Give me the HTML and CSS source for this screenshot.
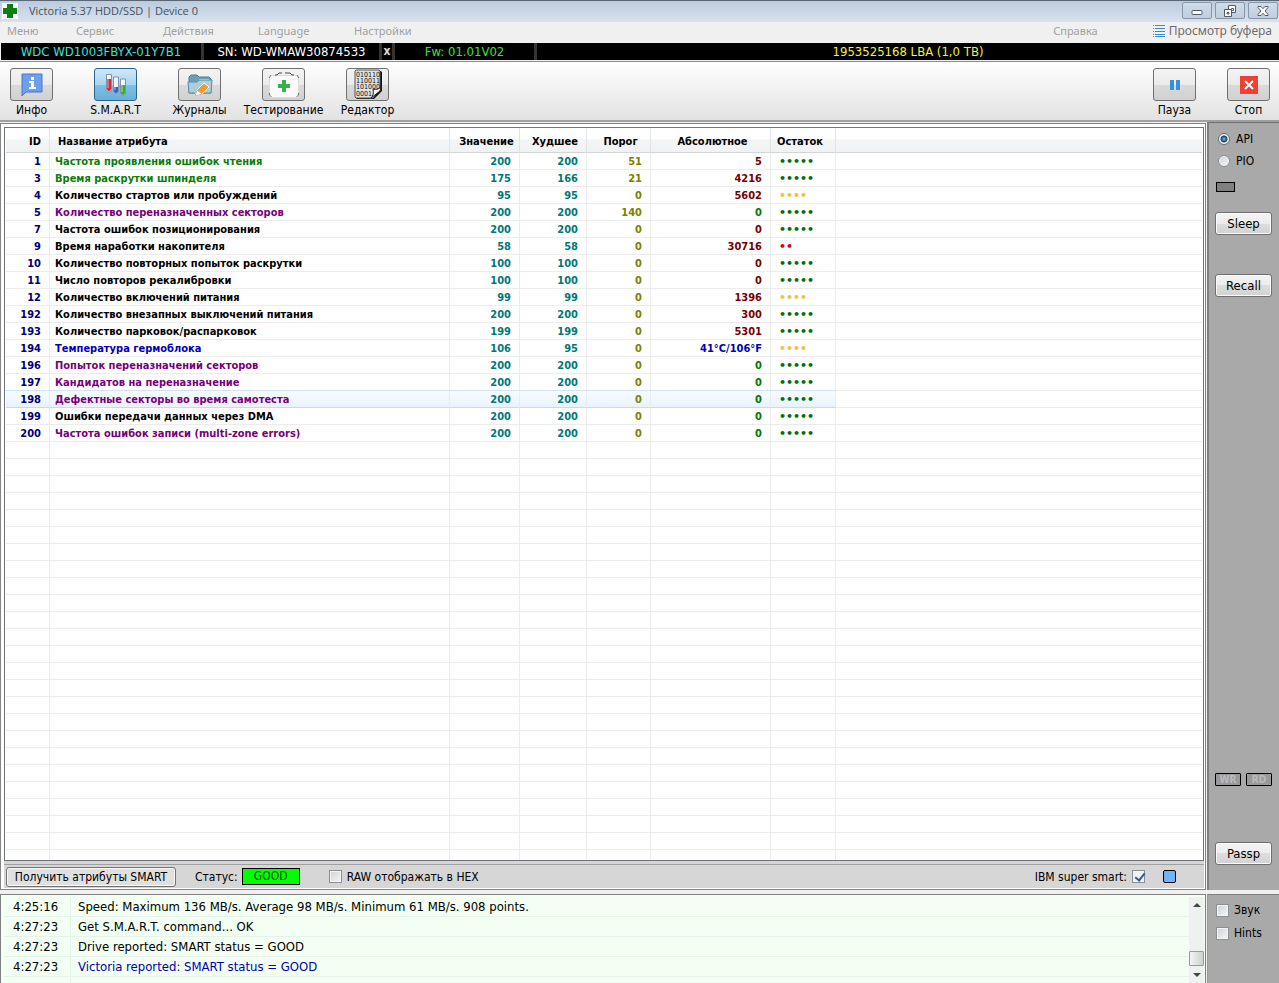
FILE: index.html
```html
<!DOCTYPE html>
<html lang="ru">
<head>
    <meta charset="UTF-8">
    <meta name="viewport" content="width=device-width, initial-scale=1.0">
    <title>Victoria 5.37 HDD/SSD | Device 0</title>
    <link rel="stylesheet" href="styles.css">
</head>
<body>

    <header class="titlebar">
        <svg class="logo" width="16" height="16" viewBox="0 0 16 16">
            <rect width="16" height="16" fill="#fff"/>
            <path d="M5 1h6v4h4v6h-4v4H5v-4H1V5h4z" fill="#0a8010"/>
        </svg>
        <span class="title">Victoria 5.37 HDD/SSD | Device 0</span>
        <div class="window-buttons">
            <button aria-label="Свернуть">
                <svg width="12" height="12" viewBox="0 0 12 12"><rect x="1" y="5.500" width="10" height="4" rx="1" fill="#fff" stroke="#4f5a68"/></svg>
            </button>
            <button aria-label="Восстановить">
                <svg width="12" height="12" viewBox="0 0 12 12" fill="#fff" stroke="#4f5a68"><path d="M4.500.5h7v7h-7z"/><path d="M7.500 3.500h2v2h-2z"/><path d="M.5 4.500h7v7h-7z"/><path d="M3 7.500h2v1.500H3z"/></svg>
            </button>
            <button aria-label="Закрыть">
                <svg width="12" height="12" viewBox="0 0 12 12"><path d="M1 1.500h3l2 2.200 2-2.200h3v1L8 6l3 3.500v1H8L6 8.300 4 10.500H1v-1L4 6 1 2.500z" fill="#fff" stroke="#4f5a68"/></svg>
            </button>
        </div>
    </header>

    <nav class="menu">
        <a href="#">Меню</a>
        <a href="#">Сервис</a>
        <a href="#">Действия</a>
        <a href="#">Language</a>
        <a href="#">Настройки</a>
        <a href="#" class="help">Справка</a>
        <a href="#" class="buffer">
            <svg width="12" height="12" viewBox="0 0 12 12" stroke="#2f8fd8"><path d="M0 .5h1M2 .5h10M0 3.500h1M2 3.500h10M0 6.500h1M2 6.500h10M0 9.500h1M2 9.500h10M0 11.500h1M2 11.500h10"/></svg>
            Просмотр буфера
        </a>
    </nav>

    <div class="device">
        <span class="model">WDC WD1003FBYX-01Y7B1</span>
        <span class="serial">SN: WD-WMAW30874533</span>
        <button class="close-device">x</button>
        <span class="firmware">Fw: 01.01V02</span>
        <span class="capacity">1953525168 LBA (1,0 TB)</span>
    </div>

    <div class="toolbar">
        <button class="tool">
            <span class="tool-icon">
                <svg width="22" height="24" viewBox="0 0 22 24">
                    <path d="M1 1h20v18H5l-4 4z" fill="#6d9fee" stroke="#4b79b8"/>
                    <path d="M10 4h3v3h-3zM8 8h5v6h2v2H8v-2h2v-4H8z" fill="#fff"/>
                </svg>
            </span>
            Инфо
        </button>
        <button class="tool">
            <span class="tool-icon active">
                <svg width="24" height="26" viewBox="0 0 24 26">
                    <g fill="#eef5fb" stroke="#7f92a6"><path d="M2.500 2.500v15a2.500 2.500 0 0 0 5 0v-15z"/><path d="M9.500 5v14a2.500 2.500 0 0 0 5 0V5z"/><path d="M16.500 7v14a2.500 2.500 0 0 0 5 0V7z"/></g>
                    <path d="M3 7h4v10a2 2 0 0 1-4 0z" fill="#d62b34"/>
                    <path d="M10 15h4v4a2 2 0 0 1-4 0z" fill="#2d62c6"/>
                    <path d="M17 13h4v8a2 2 0 0 1-4 0z" fill="#35ad3d"/>
                    <path d="M4 4v12M11 6v12M18 8v12" stroke="#fff" opacity=".6"/>
                </svg>
            </span>
            S.M.A.R.T
        </button>
        <button class="tool">
            <span class="tool-icon">
                <svg width="26" height="24" viewBox="0 0 26 24">
                    <path d="M2 20V4l2-2h6l2 2h10l2 2v14z" fill="#6b9fb5" stroke="#4d7f96"/>
                    <path d="M12 6h10v3H12z" fill="#e4f0f5"/>
                    <path d="M1 9h9l2-2h13l-1 13H2z" fill="#a9cfdd" stroke="#5c8ea2"/>
                    <path d="M8 23l2-6 7-7 5 4-7 7z" fill="#f39a2d" stroke="#fff"/>
                    <path d="M8 23l2-6 5 4z" fill="#fff" stroke="#bbb"/>
                </svg>
            </span>
            Журналы
        </button>
        <button class="tool">
            <span class="tool-icon">
                <svg width="32" height="28" viewBox="0 0 32 28">
                    <rect x="1.500" y="4.500" width="29" height="22" rx="2" fill="#fafafa" stroke="#dcdcdc"/>
                    <path d="M7 4h2l2-2h3M17 2h5l2 2h2" fill="none" stroke="#444"/>
                    <path d="M1 7l2-3M29 4l2 3M1.500 22v2l2 2M30.500 22v2l-2 2" fill="none" stroke="#777"/>
                    <path d="M14 9h4v4h4v4h-4v4h-4v-4h-4v-4h4z" fill="#35b34a"/>
                </svg>
            </span>
            Тестирование
        </button>
        <button class="tool">
            <span class="tool-icon">
                <svg width="30" height="31" viewBox="0 0 30 31">
                    <path d="M4 1h22l3 2v19l-8 8H4l-2-2V3z" fill="#111"/>
                    <path d="M3 1h23l1 1v18l-7 9H3l-1-1V2z" fill="#e2e2e2" stroke="#555"/>
                    <g class="bits"><text x="3" y="8">010110</text><text x="3" y="14">110011</text><text x="3" y="20">101000</text><text x="3" y="27">0001</text></g>
                    <path d="M18 29c2-2 3-5 2-9 3 1 6 0 8-2l-1 4z" fill="#f8f8f8" stroke="#222"/>
                </svg>
            </span>
            Редактор
        </button>
        <button class="tool pause">
            <span class="tool-icon">
                <svg width="12" height="12" viewBox="0 0 12 12"><path d="M1 1h4v10H1zM7 1h4v10H7z" fill="#2f93e0"/></svg>
            </span>
            Пауза
        </button>
        <button class="tool stop">
            <span class="tool-icon">
                <svg width="18" height="18" viewBox="0 0 18 18"><rect width="18" height="18" fill="#ea4335"/><path d="M5 5l8 8M13 5l-8 8" stroke="#fff" stroke-width="2"/></svg>
            </span>
            Стоп
        </button>
    </div>

    <main class="main">
        <section class="panel">
            <div class="table-box">
                <table class="smart">
                    <thead>
                        <tr>
                            <th class="id">ID</th>
                            <th class="name">Название атрибута</th>
                            <th class="value">Значение</th>
                            <th class="worst">Худшее</th>
                            <th class="limit">Порог</th>
                            <th class="raw">Абсолютное</th>
                            <th class="health">Остаток</th>
                            <th></th>
                        </tr>
                    </thead>
                    <tbody>
                        <tr class="green"><td>1</td><td>Частота проявления ошибок чтения</td><td>200</td><td>200</td><td>51</td><td>5</td><td>•••••</td><td></td></tr>
                        <tr class="green"><td>3</td><td>Время раскрутки шпинделя</td><td>175</td><td>166</td><td>21</td><td>4216</td><td>•••••</td><td></td></tr>
                        <tr><td>4</td><td>Количество стартов или пробуждений</td><td>95</td><td>95</td><td>0</td><td>5602</td><td class="warn">••••</td><td></td></tr>
                        <tr class="purple"><td>5</td><td>Количество переназначенных секторов</td><td>200</td><td>200</td><td>140</td><td>0</td><td>•••••</td><td></td></tr>
                        <tr><td>7</td><td>Частота ошибок позиционирования</td><td>200</td><td>200</td><td>0</td><td>0</td><td>•••••</td><td></td></tr>
                        <tr><td>9</td><td>Время наработки накопителя</td><td>58</td><td>58</td><td>0</td><td>30716</td><td class="bad">••</td><td></td></tr>
                        <tr><td>10</td><td>Количество повторных попыток раскрутки</td><td>100</td><td>100</td><td>0</td><td>0</td><td>•••••</td><td></td></tr>
                        <tr><td>11</td><td>Число повторов рекалибровки</td><td>100</td><td>100</td><td>0</td><td>0</td><td>•••••</td><td></td></tr>
                        <tr><td>12</td><td>Количество включений питания</td><td>99</td><td>99</td><td>0</td><td>1396</td><td class="warn">••••</td><td></td></tr>
                        <tr><td>192</td><td>Количество внезапных выключений питания</td><td>200</td><td>200</td><td>0</td><td>300</td><td>•••••</td><td></td></tr>
                        <tr><td>193</td><td>Количество парковок/распарковок</td><td>199</td><td>199</td><td>0</td><td>5301</td><td>•••••</td><td></td></tr>
                        <tr class="blue"><td>194</td><td>Температура гермоблока</td><td>106</td><td>95</td><td>0</td><td>41°C/106°F</td><td class="warn">••••</td><td></td></tr>
                        <tr class="purple"><td>196</td><td>Попыток переназначений секторов</td><td>200</td><td>200</td><td>0</td><td>0</td><td>•••••</td><td></td></tr>
                        <tr class="purple"><td>197</td><td>Кандидатов на переназначение</td><td>200</td><td>200</td><td>0</td><td>0</td><td>•••••</td><td></td></tr>
                        <tr class="purple selected"><td>198</td><td>Дефектные секторы во время самотеста</td><td>200</td><td>200</td><td>0</td><td>0</td><td>•••••</td><td></td></tr>
                        <tr><td>199</td><td>Ошибки передачи данных через DMA</td><td>200</td><td>200</td><td>0</td><td class="zero">0</td><td>•••••</td><td></td></tr>
                        <tr class="purple"><td>200</td><td>Частота ошибок записи (multi-zone errors)</td><td>200</td><td>200</td><td>0</td><td>0</td><td>•••••</td><td></td></tr>
                        <tr class="filler"><td></td><td></td><td></td><td></td><td></td><td></td><td></td><td></td></tr>
                    </tbody>
                </table>
            </div>
            <div class="status-row">
                <button class="btn get-smart">Получить атрибуты SMART</button>
                <span class="status-label">Статус:</span>
                <span class="status-value">GOOD</span>
                <label class="check raw-hex"><input type="checkbox">RAW отображать в HEX</label>
                <label class="check ibm" for="ibm">IBM super smart:<input type="checkbox" id="ibm" checked></label>
                <span class="blue-box"></span>
            </div>
        </section>

        <aside class="sidebar">
            <label class="check"><input type="radio" name="mode" checked>API</label>
            <label class="check"><input type="radio" name="mode">PIO</label>
            <span class="led"></span>
            <button class="btn side-btn sleep">Sleep</button>
            <button class="btn side-btn recall">Recall</button>
            <div class="indicators">
                <span>WR</span>
                <span>RD</span>
            </div>
            <button class="btn side-btn">Passp</button>
        </aside>
    </main>

    <footer class="bottom">
        <div class="log-box">
            <table class="log">
                <tr><td class="time">4:25:16</td><td>Speed: Maximum 136 MB/s. Average 98 MB/s. Minimum 61 MB/s. 908 points.</td></tr>
                <tr><td class="time">4:27:23</td><td>Get S.M.A.R.T. command... OK</td></tr>
                <tr><td class="time">4:27:23</td><td>Drive reported: SMART status = GOOD</td></tr>
                <tr><td class="time">4:27:23</td><td class="result">Victoria reported: SMART status = GOOD</td></tr>
                <tr><td class="time"></td><td></td></tr>
            </table>
            <div class="scrollbar">
                <svg width="8" height="4" viewBox="0 0 8 4"><path d="M0 4l4-4 4 4z" fill="#444"/></svg>
                <span class="thumb"></span>
                <svg width="8" height="4" viewBox="0 0 8 4"><path d="M0 0l4 4 4-4z" fill="#444"/></svg>
            </div>
        </div>
        <div class="options">
            <label class="check"><input type="checkbox">Звук</label>
            <label class="check"><input type="checkbox">Hints</label>
        </div>
    </footer>

</body>
</html>
```

FILE: styles.css
```css
* {
    box-sizing: border-box;
}

body {
    margin: 0;
    height: 100vh;
    display: flex;
    flex-direction: column;
    overflow: hidden;
    background-color: #f0f0f0;
    color: #000;
    font-family: "DejaVu Sans Condensed", "Noto Sans", sans-serif;
    font-size: 12px;
    line-height: 16px;
    white-space: nowrap;
}

button {
    font: inherit;
    color: inherit;
    padding: 0;
    border: none;
    background: none;
}

a {
    color: inherit;
    text-decoration: none;
}

svg {
    display: block;
}

/* Title bar */
.titlebar {
    display: flex;
    align-items: center;
    height: 22px;
    padding: 0 1px 2px 2px;
    border-top: 1px solid #5b6675;
    background: linear-gradient(#bccbdc, #d7e2ee);
}

.title {
    margin-left: 11px;
    font-family: "Open Sans", "Noto Sans", sans-serif;
    font-size: 11px;
    color: #44505f;
}

.window-buttons {
    display: flex;
    gap: 3px;
    margin-left: auto;
}

.window-buttons button {
    display: flex;
    align-items: center;
    justify-content: center;
    width: 30px;
    height: 17px;
    border: 1px solid #8796a8;
    border-radius: 2px;
    background: linear-gradient(#d0dcea, #bfcddd);
}

/* Menu */
.menu {
    display: grid;
    grid-template-columns: 69px 87px 95px 96px 1fr auto auto;
    align-items: center;
    height: 21px;
    padding: 0 7px 3px;
    font-family: "Noto Sans", sans-serif;
    font-size: 11px;
    color: #a0a0a0;
    background-color: #f0f0f0;
}

.menu .buffer {
    display: flex;
    align-items: center;
    gap: 4px;
    margin-left: 55px;
    font-size: 12px;
    color: #6d6d6d;
}

/* Device line */
.device {
    display: flex;
    height: 17px;
    margin-left: 1px;
    background-color: #000;
    font-size: 13px;
    line-height: 17px;
    text-align: center;
}

.model {
    width: 203px;
    border-right: 3px solid #333;
    color: #3fe0d8;
}

.serial {
    width: 178px;
    border-right: 3px solid #333;
    color: #fff;
}

.close-device {
    width: 13px;
    border-right: 3px solid #333;
    color: #ddd;
    font-size: 12px;
    font-weight: bold;
}

.firmware {
    width: 142px;
    border-right: 3px solid #333;
    color: #3ce03c;
}

.capacity {
    flex: 1;
    color: #f0f04a;
}

/* Toolbar */
.toolbar {
    display: flex;
    gap: 41px;
    height: 61px;
    margin-top: 1px;
    padding: 6px 9px 0 10px;
    border-top: 1px solid #8c8c8c;
    border-bottom: 2px solid #a0a0a0;
    background: linear-gradient(#fff, #e2e2e2);
}

.tool {
    display: flex;
    flex-direction: column;
    align-items: center;
    gap: 1px;
    width: 43px;
}

.tool-icon {
    display: flex;
    align-items: center;
    justify-content: center;
    width: 43px;
    height: 33px;
    border: 1px solid #707070;
    border-radius: 3px;
    background: linear-gradient(#f3f3f3 0%, #ebebeb 50%, #dadada 50%, #d0d0d0 100%);
}

.tool-icon.active {
    border-color: #2c628b;
    background: linear-gradient(#d0e8f7 0%, #a8d5ef 50%, #82bfe3 50%, #68b0da 100%);
}

.tool.pause {
    margin-left: auto;
}

.tool.stop {
    margin-left: -10px;
}

.bits {
    font: 7px "DejaVu Sans Condensed", sans-serif;
    fill: #111;
}

/* Main area */
.main {
    flex: 1;
    display: flex;
    min-height: 0;
    gap: 1px;
}

.panel {
    flex: 1;
    display: flex;
    flex-direction: column;
    min-width: 0;
    margin-top: 1px;
    padding: 3px 1px 1px 2px;
    border: 1px solid #858585;
    background-color: #fff;
}

.table-box {
    flex: 1;
    min-height: 0;
    margin-left: 1px;
    padding: 0 1px;
    border: 1px solid #707478;
    overflow: hidden;
}

.smart {
    width: 100%;
    height: 100%;
    table-layout: fixed;
    border-collapse: separate;
    border-spacing: 0;
    font-size: 11px;
    font-weight: bold;
}

.smart th {
    height: 25px;
    padding: 3px 0 0 4px;
    border-right: 1px solid #e0e3e7;
    border-bottom: 1px solid #d5d5d5;
    background: linear-gradient(#fff 0%, #fff 45%, #f3f4f6 50%, #f1f2f4 100%);
}

.smart td {
    height: 17px;
    padding: 2px 8px 0 0;
    border-right: 1px solid #ececec;
    border-bottom: 1px solid #ececec;
    line-height: 14px;
    text-align: right;
    color: #007878;
}

.smart th:last-child,
.smart td:last-child {
    border-right: none;
}

.smart .id { width: 44px; padding-right: 8px; text-align: right; }
.smart .name { width: 400px; padding-left: 8px; text-align: left; }
.smart .value { width: 70px; }
.smart .worst { width: 67px; }
.smart .limit { width: 64px; }
.smart .raw { width: 120px; }
.smart .health { width: 65px; padding-left: 6px; text-align: left; }

.smart td:nth-child(1) {
    color: #000078;
}

.smart td:nth-child(2) {
    padding-left: 5px;
    text-align: left;
    color: #000;
}

.smart td:nth-child(5) {
    color: #808000;
}

.smart td:nth-child(6) {
    color: #780000;
}

.smart td:nth-child(7) {
    padding-left: 8px;
    text-align: left;
    font-family: "DejaVu Sans", sans-serif;
    color: #007000;
}

.smart td.warn:nth-child(7) {
    color: #f0c040;
}

.smart td.bad:nth-child(7) {
    color: #d80010;
}

.smart .green td:nth-child(2) {
    color: #0a7d0a;
}

.smart .purple td:nth-child(2) {
    color: #780078;
}

.smart .purple td:nth-child(6),
.smart td.zero:nth-child(6) {
    color: #007800;
}

.smart .blue td:nth-child(2),
.smart .blue td:nth-child(6) {
    color: #0000b4;
}

.selected td:not(:last-child) {
    border-bottom-color: #c4dcf0;
    background: linear-gradient(#f8fbff, #e9f3fd);
    box-shadow: 0 -1px #d0e4f4;
}

.smart .filler td {
    height: auto;
    border-bottom: none;
    background: repeating-linear-gradient(transparent 0, transparent 16px, #ececec 16px, #ececec 17px);
}

/* Row under the table */
.status-row {
    display: flex;
    align-items: center;
    height: 27px;
    margin-left: 1px;
    padding: 4px 28px 0 2px;
    background: linear-gradient(#d6d6d6 3px, #a0a0a0 3px, #a0a0a0 4px, #d6d6d6 4px);
}

.btn {
    height: 23px;
    border: 1px solid #707070;
    border-radius: 3px;
    background: linear-gradient(#f4f4f4 0%, #ececec 50%, #dddddd 50%, #d2d2d2 100%);
    box-shadow: inset 0 0 0 1px #fafafa;
}

.get-smart {
    width: 170px;
    height: 20px;
    background: #e0e0e0;
}

.status-label {
    margin-left: 19px;
}

.status-value {
    width: 58px;
    height: 17px;
    margin-left: 4px;
    border: 1px solid #000;
    background-color: #00ff00;
    color: #064a06;
    line-height: 15px;
    text-align: center;
}

.check {
    display: flex;
    align-items: center;
    gap: 5px;
}

.raw-hex {
    margin-left: 29px;
}

.ibm {
    margin-left: auto;
}

input {
    appearance: none;
    flex: none;
    width: 13px;
    height: 13px;
    margin: 0;
    border: 1px solid #8a8f94;
    background: linear-gradient(135deg, #cfd2d6, #f6f6f6);
    box-shadow: inset 0 0 0 1px #f4f4f4;
}

input[type="checkbox"]:checked {
    position: relative;
    background: #eef1f6;
}

input[type="checkbox"]:checked::after {
    content: "";
    position: absolute;
    left: 4px;
    top: 0;
    width: 4px;
    height: 8px;
    border: solid #3c5593;
    border-width: 0 2px 2px 0;
    transform: rotate(38deg);
}

input[type="radio"] {
    width: 12px;
    height: 12px;
    border-radius: 50%;
}

input[type="radio"]:checked {
    border-color: #5b6e7c;
    background: radial-gradient(circle, #5fc0e8 0, #17405f 3px, #f4f4f4 4px);
}

.blue-box {
    width: 13px;
    height: 13px;
    margin-left: 18px;
    border: 1px solid #000;
    border-radius: 2px;
    background-color: #74b3f7;
}

/* Right column */
.sidebar {
    display: flex;
    flex-direction: column;
    width: 72px;
    padding: 8px 7px 25px 6px;
    gap: 6px;
    border-top: 1px solid #707070;
    border-left: 2px solid #808080;
    background-color: #a9a9a9;
}

.sidebar .check {
    margin-left: 3px;
    gap: 6px;
}

.sidebar .led {
    width: 19px;
    height: 10px;
    margin-top: 7px;
    margin-left: 1px;
    border: 1px solid #000;
    background-color: #808080;
}

.sleep {
    margin-top: 14px;
}

.recall {
    margin-top: 33px;
}

.side-btn {
    width: 57px;
    font-size: 13px;
}

.indicators {
    display: flex;
    gap: 5px;
    margin-top: auto;
    margin-bottom: 50px;
}

.indicators span {
    width: 27px;
    height: 13px;
    border: 1px solid #000;
    border-radius: 1px;
    background-color: #999;
    color: #bbb;
    font-size: 10px;
    font-weight: bold;
    line-height: 11px;
    text-align: center;
}

/* Log */
.bottom {
    display: flex;
    height: 89px;
    margin-top: 4px;
    gap: 1px;
}

.log-box {
    flex: 1;
    display: flex;
    padding: 2px 1px 0 3px;
    border: 1px solid #808080;
    border-bottom: none;
    background-color: #f2fff2;
    overflow: hidden;
}

.log {
    flex: 1;
    align-self: flex-start;
    border-collapse: separate;
    border-spacing: 0;
    font-size: 13px;
}

.log td {
    height: 20px;
    padding: 0 0 0 7px;
    border-bottom: 1px solid #e6f1ea;
}

.log .time {
    width: 67px;
    padding-left: 9px;
    border-right: 1px solid #e6f1ea;
}

.log .result {
    color: #0000b0;
}

.scrollbar {
    display: flex;
    flex-direction: column;
    align-items: center;
    width: 15px;
    padding: 6px 0;
    background-color: #f0f0f0;
}

.thumb {
    width: 15px;
    height: 15px;
    margin-top: auto;
    margin-bottom: 7px;
    border: 1px solid #999;
    border-radius: 1px;
    background: linear-gradient(90deg, #f4f4f4, #cfcfcf);
}

.options {
    display: flex;
    flex-direction: column;
    gap: 7px;
    width: 72px;
    padding: 7px 7px 0 8px;
    border-top: 1px solid #808080;
    border-left: 1px solid #999;
    background-color: #a9a9a9;
}
```
